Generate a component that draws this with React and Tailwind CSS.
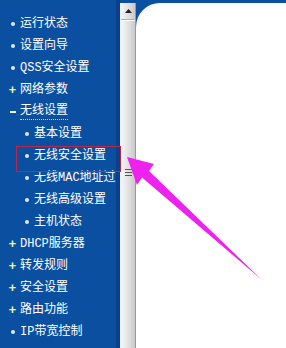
import React from 'react';

const menu = [
    { label: '运行状态', type: 'dot' },
    { label: '设置向导', type: 'dot' },
    { label: 'QSS安全设置', type: 'dot' },
    { label: '网络参数', type: 'plus' },
    { label: '无线设置', type: 'minus', focused: true },
    { label: '基本设置', type: 'sub' },
    { label: '无线安全设置', type: 'sub', marked: true },
    { label: '无线MAC地址过滤', type: 'sub' },
    { label: '无线高级设置', type: 'sub' },
    { label: '主机状态', type: 'sub' },
    { label: 'DHCP服务器', type: 'plus' },
    { label: '转发规则', type: 'plus' },
    { label: '安全设置', type: 'plus' },
    { label: '路由功能', type: 'plus' },
    { label: 'IP带宽控制', type: 'dot' },
];

const Marker = ({ type }) => {
    if (type === 'plus') {
        return <span className="w-[9px] shrink-0 text-center text-[13px] font-bold leading-none text-[#e6f3b0]">+</span>;
    }
    if (type === 'minus') {
        return <span className="w-[9px] shrink-0 flex justify-center"><span className="w-[6px] h-[2px] bg-[#eef4d8]"></span></span>;
    }
    return <span className="w-[9px] shrink-0 flex justify-center"><span className="w-[4px] h-[4px] rounded-full bg-[#dfe9f7]"></span></span>;
};

const App = () => {
    return (
        <div
            className="relative flex w-[286px] h-[348px] overflow-hidden bg-white"
            style={{ fontFamily: '"Liberation Mono", "Noto Sans CJK SC", monospace' }}
        >
            {/* Left menu */}
            <div className="w-[116px] shrink-0 bg-[#0b4fa1] pt-[13px] overflow-hidden">
                {menu.map((item) => (
                    <div
                        key={item.label}
                        className={`relative h-[22px] flex items-center whitespace-nowrap text-[12px] text-white ${item.type === 'sub' ? 'pl-[22px]' : 'pl-[8px]'}`}
                    >
                        <Marker type={item.type} />
                        <span className={`ml-[3px] shrink-0 leading-[15px] ${item.focused ? 'border-b border-dotted border-[#c8d6ea]' : ''}`}>
                            {item.label}
                        </span>
                    </div>
                ))}
            </div>
            <div className="w-[4px] shrink-0 bg-[#0a418a]"></div>

            {/* Scrollbar */}
            <div className="w-[16px] shrink-0 flex flex-col bg-[#0b4fa1]">
                <div className="h-[3px]"></div>
                <div className="flex-1 flex flex-col border-l border-[#e8eef7] border-r border-r-[#9a9a9a] bg-[linear-gradient(to_right,#f6f6f6,#e2e2e2_50%,#c9c9c9)]">
                    <div className="h-[17px] flex items-center justify-center border-b border-[#b0b0b0]">
                        <svg width="7" height="4" viewBox="0 0 7 4">
                            <path d="M0 4 L3.5 0 L7 4 Z" fill="#222" />
                        </svg>
                    </div>
                    <div className="flex-1 flex flex-col justify-center items-center gap-[2px] pb-[24px] border-t border-white">
                        <div className="w-[7px] h-px bg-[#555]"></div>
                        <div className="w-[7px] h-px bg-[#555]"></div>
                        <div className="w-[7px] h-px bg-[#555]"></div>
                    </div>
                </div>
            </div>

            {/* Content */}
            <div className="flex-1 bg-[#0b4fa1] pt-[3px]">
                <div className="h-full bg-white rounded-tl-[24px]"></div>
            </div>

            {/* Annotation: red box and arrow */}
            <div className="absolute left-[16px] top-[146px] w-[105px] h-[26px] border border-[#b42a4a]"></div>
            <svg className="absolute left-0 top-0" width="286" height="348" viewBox="0 0 286 348">
                <polygon
                    points="127,157 154,164 149,171 262,280 142,177.5 137,185"
                    fill="#ee22ee"
                />
            </svg>
        </div>
    );
};

export default App;
